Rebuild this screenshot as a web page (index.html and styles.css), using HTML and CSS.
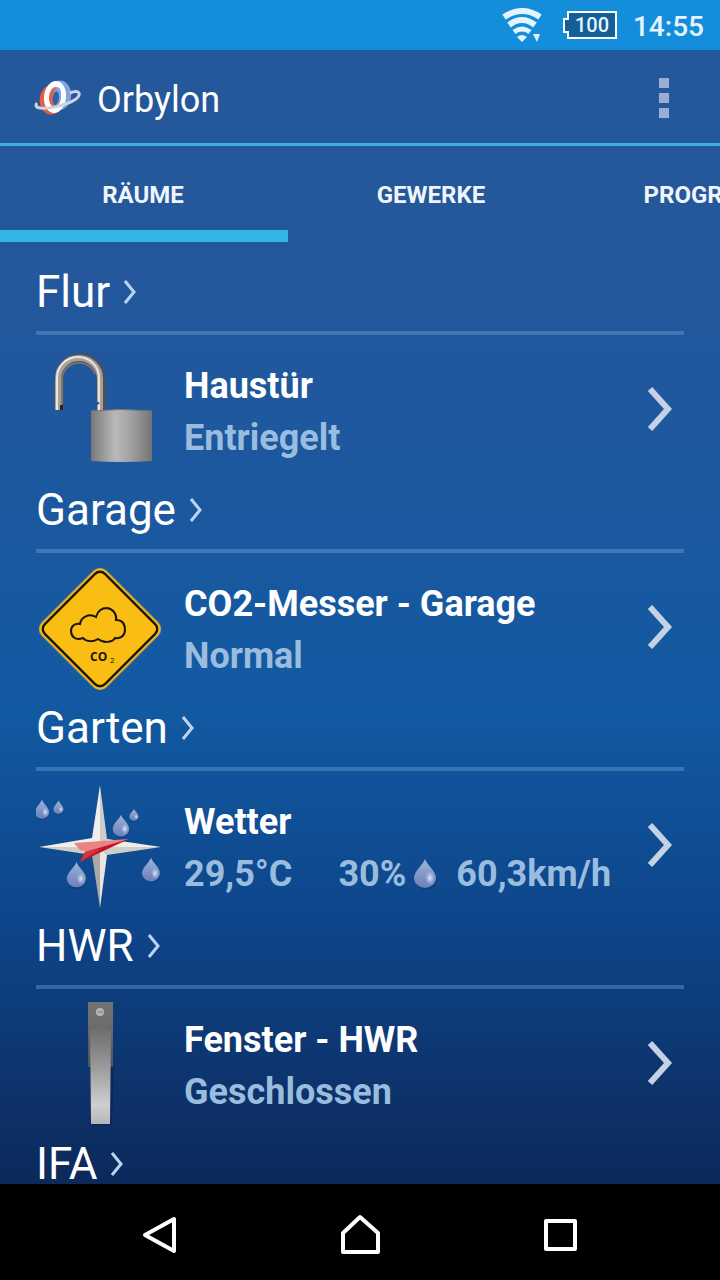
FILE: index.html
```html
<!DOCTYPE html>
<html lang="de">
<head>
    <meta charset="UTF-8">
    <meta name="viewport" content="width=device-width, initial-scale=1">
    <title>Orbylon</title>
    <link rel="stylesheet" href="styles.css">
</head>
<body>
    <!-- shared icons -->
    <svg class="sprite" aria-hidden="true">
        <defs>
            <linearGradient id="dropFill" x1="0" y1="0" x2="0" y2="1">
                <stop offset="0" stop-color="#a3b4da"/>
                <stop offset="0.5" stop-color="#8399c9"/>
                <stop offset="1" stop-color="#6a80b9"/>
            </linearGradient>
            <radialGradient id="dropShine">
                <stop offset="0" stop-color="#e4eafa"/>
                <stop offset="1" stop-color="#b9c6e6" stop-opacity="0"/>
            </radialGradient>
            <symbol id="drop" viewBox="0 0 24 32">
                <path d="M12 1C10 7 1 13 1 20a11 10 0 0 0 22 0C23 13 14 7 12 1z" fill="#0a2c66" opacity="0.4" transform="translate(1 2)"/>
                <path d="M12 1C10 7 1 13 1 20a11 10 0 0 0 22 0C23 13 14 7 12 1z" fill="url(#dropFill)"/>
                <ellipse cx="17" cy="20" rx="5" ry="7" fill="url(#dropShine)"/>
            </symbol>
            <symbol id="chevron" viewBox="0 0 48 48">
                <path d="M14 4l18 20-18 20" fill="none" stroke="#c5d1e5" stroke-width="6"/>
            </symbol>
            <symbol id="chevron-small" viewBox="0 0 12 24">
                <path d="M1 1l9 11-9 11" fill="none" stroke="#bcd3f2" stroke-width="3"/>
            </symbol>
        </defs>
    </svg>

    <div class="status-bar">
        <svg class="wifi" viewBox="0 0 40 34" aria-label="WLAN">
            <g fill="none" stroke="#e6f4ff" stroke-width="6">
                <path d="M2 9q18-12 36 0"/>
                <path d="M7 17q13-10 26 0"/>
                <path d="M12 24q8-6 16 0" stroke-width="5"/>
            </g>
            <path d="M15 29q5-4 10 0l-5 5z" fill="#e6f4ff"/>
            <path d="M29 23h11l-5 11z" fill="#148edb"/>
            <path d="M31 26h7l-3 8z" fill="#e6f4ff"/>
        </svg>
        <div class="battery">
            <svg viewBox="0 0 56 28" aria-hidden="true">
                <path d="M6 1h48v26H6v-6H2V8h4z" fill="#155f98" stroke="#fff" stroke-width="2"/>
            </svg>
            <span>100</span>
        </div>
        <time>14:55</time>
    </div>

    <header class="app-bar">
        <svg class="logo" viewBox="0 0 50 40" aria-hidden="true">
            <g transform="rotate(6 23 19)">
                <ellipse cx="27" cy="17" rx="12" ry="15" fill="#7fa5e0"/>
                <ellipse cx="20" cy="22" rx="12" ry="15" fill="#ea5b40"/>
                <ellipse cx="23" cy="19" rx="11" ry="16" fill="#fff"/>
                <ellipse cx="23" cy="19" rx="6" ry="10" fill="#e0604a"/>
                <ellipse cx="25" cy="18" rx="4" ry="9" fill="#7fa5e0"/>
                <ellipse cx="24" cy="20" rx="3" ry="7" fill="#2c62a8"/>
            </g>
            <path d="M5 25C-4 37 51 26 47 15Q45 12 38 15" fill="none" stroke="#cdd3e2" stroke-width="3"/>
        </svg>
        <h1>Orbylon</h1>
        <button class="menu" aria-label="Menü"><i></i><i></i><i></i></button>
    </header>

    <nav class="tabs">
        <button class="tab active">RÄUME</button>
        <button class="tab">GEWERKE</button>
        <button class="tab">PROGRAMME</button>
    </nav>

    <main class="rooms">
        <section class="room">
            <h2><a href="#flur">Flur <svg><use href="#chevron-small"/></svg></a></h2>
            <a class="device" href="#haustuer">
                <svg class="device-icon" viewBox="0 0 126 128" aria-hidden="true">
                    <defs>
                        <linearGradient id="lockBody">
                            <stop offset="0" stop-color="#777"/>
                            <stop offset="0.12" stop-color="#8c8c8c"/>
                            <stop offset="0.4" stop-color="#b9b9b9"/>
                            <stop offset="0.65" stop-color="#a2a2a2"/>
                            <stop offset="1" stop-color="#747474"/>
                        </linearGradient>
                    </defs>
                    <g fill="none">
                        <path d="M23 65V34a21 21 0 0 1 42 0v32" stroke="#55504c" stroke-width="9"/>
                        <path d="M22 65V34a21 21 0 0 1 42 0v32" stroke="#a5a19d" stroke-width="6"/>
                        <path d="M21 65V33a21 21 0 0 1 42 0v33" stroke="#e9e6e2" stroke-width="2"/>
                        <path d="M26 60V34a17 17 0 0 1 33-5" stroke="#777370" stroke-width="2"/>
                    </g>
                    <path d="M24 60h3v5h-3z" fill="#222"/>
                    <path d="M60 56l4 2-4 3z" fill="#1f579c"/>
                    <path d="M55 66q30-3 61 0v50q-31 2-61 0z" fill="url(#lockBody)"/>
                    <path d="M55 66q30-3 61 0" fill="none" stroke="#777" stroke-width="1"/>
                </svg>
                <div class="device-text">
                    <h3>Haustür</h3>
                    <p>Entriegelt</p>
                </div>
                <svg class="arrow"><use href="#chevron"/></svg>
            </a>
        </section>

        <section class="room">
            <h2><a href="#garage">Garage <svg><use href="#chevron-small"/></svg></a></h2>
            <a class="device" href="#co2">
                <svg class="device-icon" viewBox="0 0 126 128" aria-hidden="true">
                    <g transform="rotate(45 64 66)">
                        <rect x="18.5" y="20.5" width="91" height="91" rx="9" fill="#f9bd13" stroke="#c5a54a" stroke-width="1"/>
                        <rect x="21.5" y="23.5" width="85" height="85" rx="7" fill="none" stroke="#1c1403" stroke-width="2.4"/>
                    </g>
                    <path d="M47 75C39 78 35 73 35 68C35 63 39 60 44 61C45 54 53 50 60 54C62 47 67 45 71 45C77 46 81 51 80 57C86 57 89 61 89 67C89 73 84 76 79 75C76 80 67 80 62 76C58 79 50 79 47 75z" fill="none" stroke="#1c1403" stroke-width="2"/>
                    <text class="co2" x="54" y="98">CO</text>
                    <text class="co2-sub" x="74" y="100">2</text>
                </svg>
                <div class="device-text">
                    <h3>CO2-Messer - Garage</h3>
                    <p>Normal</p>
                </div>
                <svg class="arrow"><use href="#chevron"/></svg>
            </a>
        </section>

        <section class="room">
            <h2><a href="#garten">Garten <svg><use href="#chevron-small"/></svg></a></h2>
            <a class="device" href="#wetter">
                <svg class="device-icon" viewBox="0 0 126 128" aria-hidden="true">
                    <use href="#drop" x="-2" y="18" width="16" height="21"/>
                    <use href="#drop" x="17" y="19" width="11" height="15"/>
                    <use href="#drop" x="76" y="33" width="18" height="24"/>
                    <use href="#drop" x="93" y="27" width="10" height="14"/>
                    <use href="#drop" x="30" y="80" width="21" height="28"/>
                    <use href="#drop" x="105" y="76" width="20" height="26"/>
                    <!-- compass rose, light and dark halves -->
                    <path d="M64 4L56 57L64 66z M3 66L56 57L64 66z M125 66L71 58L64 66z" fill="#efeeea"/>
                    <path d="M64 4L71 58L64 66z M3 66L56 74L64 66z M125 66L71 74L64 66z" fill="#cfcfca"/>
                    <path d="M64 127L56 74L64 66z" fill="#aaa9a4"/>
                    <path d="M64 127L71 74L64 66z" fill="#e8e7e2"/>
                    <path d="M38 62L93 58L53 71L44 69z" fill="#e88484"/>
                    <path d="M93 58L44 81L49 71z" fill="#c31422"/>
                    <path d="M44 81L49 71L66 67z" fill="#d83340"/>
                </svg>
                <div class="device-text">
                    <h3>Wetter</h3>
                    <p class="values">
                        <span>29,5°C</span>
                        <span class="humidity">30%<svg><use href="#drop"/></svg></span>
                        <span>60,3km/h</span>
                    </p>
                </div>
                <svg class="arrow"><use href="#chevron"/></svg>
            </a>
        </section>

        <section class="room">
            <h2><a href="#hwr">HWR <svg><use href="#chevron-small"/></svg></a></h2>
            <a class="device" href="#fenster">
                <svg class="device-icon" viewBox="0 0 126 128" aria-hidden="true">
                    <defs>
                        <linearGradient id="handleBase" x1="0" y1="0" x2="0" y2="1">
                            <stop offset="0" stop-color="#737373"/>
                            <stop offset="0.35" stop-color="#6c6c6c"/>
                            <stop offset="1" stop-color="#4d5157"/>
                        </linearGradient>
                        <linearGradient id="handleGrip" x1="0" y1="0" x2="0" y2="1">
                            <stop offset="0" stop-color="#6c6c6c"/>
                            <stop offset="0.35" stop-color="#929292"/>
                            <stop offset="0.8" stop-color="#cfcfcf"/>
                            <stop offset="1" stop-color="#b5b6b8"/>
                        </linearGradient>
                    </defs>
                    <path d="M54 68h24l-2 58H54z" fill="#081f4b" opacity="0.5"/>
                    <path d="M52 3h25v65H52z" fill="url(#handleBase)"/>
                    <path d="M54 30q10-4 21 0l-1 95H55z" fill="url(#handleGrip)"/>
                    <circle cx="64" cy="13" r="4" fill="#b5b5b5"/>
                    <path d="M62 13h5" stroke="#777" stroke-width="1"/>
                </svg>
                <div class="device-text">
                    <h3>Fenster - HWR</h3>
                    <p>Geschlossen</p>
                </div>
                <svg class="arrow"><use href="#chevron"/></svg>
            </a>
        </section>

        <section class="room">
            <h2><a href="#ifa">IFA <svg><use href="#chevron-small"/></svg></a></h2>
        </section>
    </main>

    <footer class="nav-bar">
        <button aria-label="Zurück">
            <svg viewBox="0 0 48 48"><path d="M9 27L38 11v32z"/></svg>
        </button>
        <button aria-label="Startseite">
            <svg viewBox="0 0 48 48"><path d="M7 44V25L24 9l18 16v19z"/></svg>
        </button>
        <button aria-label="Übersicht">
            <svg viewBox="0 0 48 48"><path d="M10 13h29v28H10z"/></svg>
        </button>
    </footer>
</body>
</html>
```
FILE: styles.css
```css
* {
    margin: 0;
    padding: 0;
    box-sizing: border-box;
}

body {
    font-family: Roboto, "Liberation Sans", sans-serif;
    height: 100vh;
    display: flex;
    flex-direction: column;
    overflow: hidden;
    color: #fff;
    background: linear-gradient(180deg, #25579b 0%, #25579b 20%, #1459a1 52%, #1159a1 56%, #0e458a 72%, #0c2859 93%);
}

button {
    font-family: inherit;
    color: inherit;
    background: none;
    border: none;
    cursor: pointer;
}

a {
    color: inherit;
    text-decoration: none;
}

svg {
    display: block;
    flex: none;
}

.sprite {
    position: absolute;
    width: 0;
    height: 0;
}

/* Status bar */
.status-bar {
    flex: none;
    height: 50px;
    padding: 0 16px;
    display: flex;
    align-items: center;
    justify-content: flex-end;
    background: #148edb;
    color: #e6f4ff;
}

.wifi {
    width: 40px;
    height: 34px;
    margin-right: 20px;
}

.battery {
    display: grid;
    place-items: center;
    margin-right: 15px;
    font-size: 20px;
    font-weight: 500;
}

.battery svg,
.battery span {
    grid-area: 1 / 1;
}

.battery span {
    padding-left: 4px;
}

.battery svg {
    width: 56px;
    height: 28px;
}

.status-bar time {
    font-size: 28px;
    font-weight: 500;
    padding-top: 2px;
}

/* App bar */
.app-bar {
    flex: none;
    height: 96px;
    padding: 2px 32px 0;
    display: flex;
    align-items: center;
    border-bottom: 3px solid #3bb0e4;
}

.logo {
    width: 50px;
    height: 40px;
    margin-right: 15px;
}

.app-bar h1 {
    flex: 1;
    font-size: 36px;
    font-weight: 400;
    line-height: 44px;
    padding-top: 4px;
}

.menu {
    width: 48px;
    height: 48px;
    display: flex;
    flex-direction: column;
    align-items: center;
    justify-content: center;
    gap: 5px;
}

.menu i {
    width: 10px;
    height: 10px;
    background: #9aadd2;
}

/* Tabs */
.tabs {
    flex: none;
    height: 96px;
    display: flex;
    overflow: hidden;
}

.tab {
    flex: 0 0 40%;
    padding: 14px 2px 0 0;
    font-size: 24px;
    font-weight: 700;
    color: #f0f5fc;
    border-bottom: 12px solid transparent;
}

.tab.active {
    border-bottom-color: #33b5e5;
}

/* Rooms */
.rooms {
    flex: 1;
    min-height: 0;
    padding: 23px 36px 0;
    overflow: hidden;
}

.room h2 {
    height: 70px;
    font-size: 44px;
    font-weight: 400;
    line-height: 54px;
    border-bottom: 4px solid rgba(118, 164, 216, 0.4);
}

.room h2 a {
    display: inline-flex;
    align-items: center;
    gap: 14px;
}

.room h2 svg {
    width: 12px;
    height: 24px;
}

.room:last-child h2 {
    border-bottom: none;
}

.device {
    height: 148px;
    display: flex;
    align-items: center;
}

.device-icon {
    width: 126px;
    height: 128px;
    margin-right: 22px;
}

.co2 {
    font: 700 12px "Open Sans", sans-serif;
    fill: #1c1403;
}

.co2-sub {
    font: 400 8px "Open Sans", sans-serif;
    fill: #1c1403;
}

.device-text {
    flex: 1;
    min-width: 0;
    font-size: 36px;
    font-weight: 700;
    line-height: 52px;
    padding-top: 6px;
}

.device-text h3 {
    font-size: 36px;
}

.device-text p {
    color: #9abddf;
}

.values {
    display: flex;
    white-space: nowrap;
}

.humidity {
    display: flex;
    align-items: center;
    margin: 0 19px 0 46px;
    gap: 7px;
}

.humidity svg {
    width: 24px;
    height: 32px;
}

.arrow {
    width: 48px;
    height: 48px;
    margin-left: -12px;
}

/* Navigation bar */
.nav-bar {
    flex: none;
    height: 96px;
    padding: 0 60px;
    display: flex;
    background: #000;
}

.nav-bar button {
    flex: 1;
    display: flex;
    align-items: center;
    justify-content: center;
}

.nav-bar svg {
    width: 48px;
    height: 48px;
    fill: none;
    stroke: #fff;
    stroke-width: 4;
    stroke-linejoin: round;
}
```
